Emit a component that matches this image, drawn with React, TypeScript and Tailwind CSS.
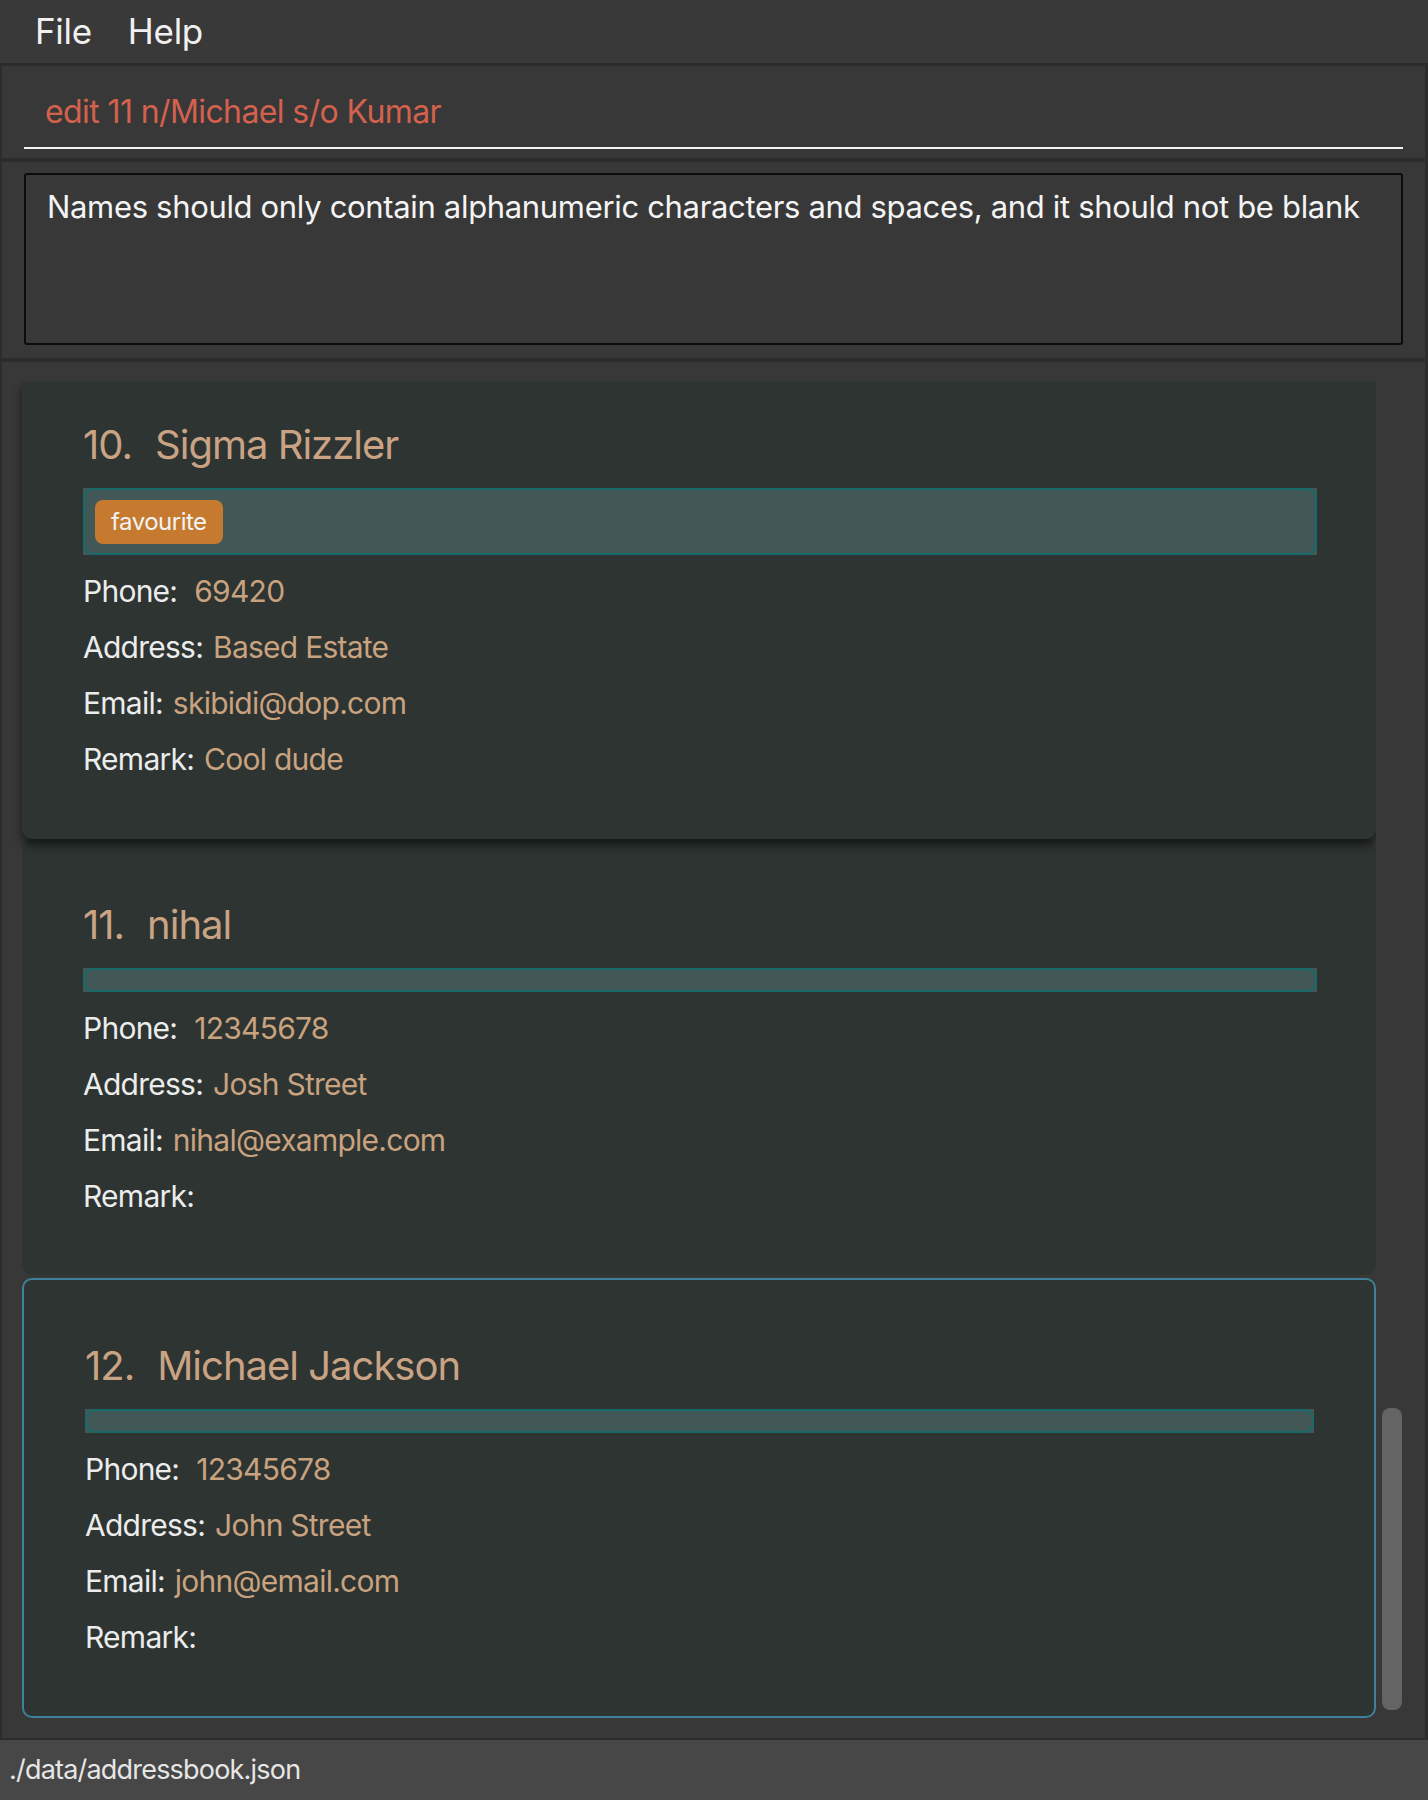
import React from 'react';

type Person = {
  index: number;
  name: string;
  tags: string[];
  phone: string;
  address: string;
  email: string;
  remark: string;
};

const people: Person[] = [
  { index: 10, name: 'Sigma Rizzler', tags: ['favourite'], phone: '69420', address: 'Based Estate', email: 'skibidi@dop.com', remark: 'Cool dude' },
  { index: 11, name: 'nihal', tags: [], phone: '12345678', address: 'Josh Street', email: 'nihal@example.com', remark: '' },
  { index: 12, name: 'Michael Jackson', tags: [], phone: '12345678', address: 'John Street', email: 'john@email.com', remark: '' },
];

const font = { fontFamily: 'Inter, "Noto Sans", sans-serif' };

const Row = ({ label, value, wide }: { label: string; value: string; wide?: boolean }) => (
  <div className="flex h-[56px] items-center text-[30px] tracking-[-0.75px]">
    <span className="text-[#ececec]">{label}</span>
    <span className={`${wide ? 'ml-[17px]' : 'ml-[10px]'} text-[#c9a27f]`}>{value}</span>
  </div>
);

const PersonCard = ({ p, first, selected }: { p: Person; first?: boolean; selected?: boolean }) => (
  <div
    className={`rounded-[10px] bg-[#2d3432] pl-[61px] pr-[59px] pb-[51px] ${first ? 'relative z-10 pt-[38px] pb-[52px] rounded-t-none shadow-[0_6px_10px_rgba(0,0,0,0.55)]' : 'pt-[61px]'} ${
      selected ? 'mt-[3px] border-2 border-[#3e8199] pt-[57px] pl-[59px] pr-[60px] pb-[51px]' : ''
    }`}
  >
    <div className="flex h-[50px] items-center text-[40px] tracking-[-1px] text-[#c9a383]">
      <span>{p.index}.</span>
      <span className="ml-[23px]">{p.name}</span>
    </div>
    <div className="mt-[18px] bg-[#425857]">
      <div
        className={`flex items-center rounded-[10px] border-2 border-[#166a6a] ${p.tags.length ? 'h-[67px] pl-[10px]' : 'h-[24px]'}`}
      >
        {p.tags.map((t) => (
          <span key={t} className="flex h-[44px] items-center rounded-[8px] bg-[#c57a30] px-[16px] text-[24px] tracking-[-0.5px] text-[#f2f2f2]">
            {t}
          </span>
        ))}
      </div>
    </div>
    <div className="mt-[8px]">
      <Row label="Phone:" value={p.phone} wide />
      <Row label="Address:" value={p.address} />
      <Row label="Email:" value={p.email} />
      <Row label="Remark:" value={p.remark} />
    </div>
  </div>
);

export default function App() {
  return (
    <div className="flex h-[1800px] w-[1428px] flex-col bg-[#2c2c2c]" style={font}>
      {/* menu bar */}
      <div className="flex h-[63px] items-center gap-[36px] bg-[#393939] pl-[35px] text-[35px] tracking-[-0.3px] text-[#f0f0f0]">
        <span>File</span>
        <span>Help</span>
      </div>

      {/* command box */}
      <div className="mt-[3px] h-[92px] border-l-2 border-r-[3px] border-[#2c2c2c] bg-[#383838] px-[22px]">
        <div className="flex h-[83px] items-end border-b-2 border-[#f2f2f2] pb-[11px] pl-[21px] text-[32px] tracking-[-0.6px] text-[#d4614d]">
          edit 11 n/Michael s/o Kumar
        </div>
      </div>

      {/* result display */}
      <div className="mt-[4px] h-[196px] border-l-2 border-r-[3px] border-[#2c2c2c] bg-[#383838] px-[22px] pt-[11px]">
        <div className="h-[172px] rounded-[3px] border-2 border-[#0c0c0c] bg-[#383838] px-[21px] pt-[9px] text-[31px] tracking-[-0.33px] text-[#f4f4f4]">
          Names should only contain alphanumeric characters and spaces, and it should not be blank
        </div>
      </div>

      {/* person list */}
      <div className="mt-[4px] flex h-[1376px] border-l-2 border-r-[3px] border-[#2c2c2c] bg-[#383838]">
        <div className="flex w-[1374px] flex-col overflow-hidden pl-[20px] pt-[20px]">
          {people.map((p, i) => (
            <PersonCard key={p.index} p={p} first={i === 0} selected={i === people.length - 1} />
          ))}
        </div>
        <div className="flex flex-1 flex-col justify-end pb-[28px] pl-[6px]">
          <div className="h-[302px] w-[20px] rounded-[8px] bg-[#646464]" />
        </div>
      </div>

      {/* status bar */}
      <div className="mt-[2px] flex h-[60px] items-center bg-[#474747] pl-[9px] text-[27px] tracking-[-0.8px] text-[#e6e6e6]">
        ./data/addressbook.json
      </div>
    </div>
  );
}
